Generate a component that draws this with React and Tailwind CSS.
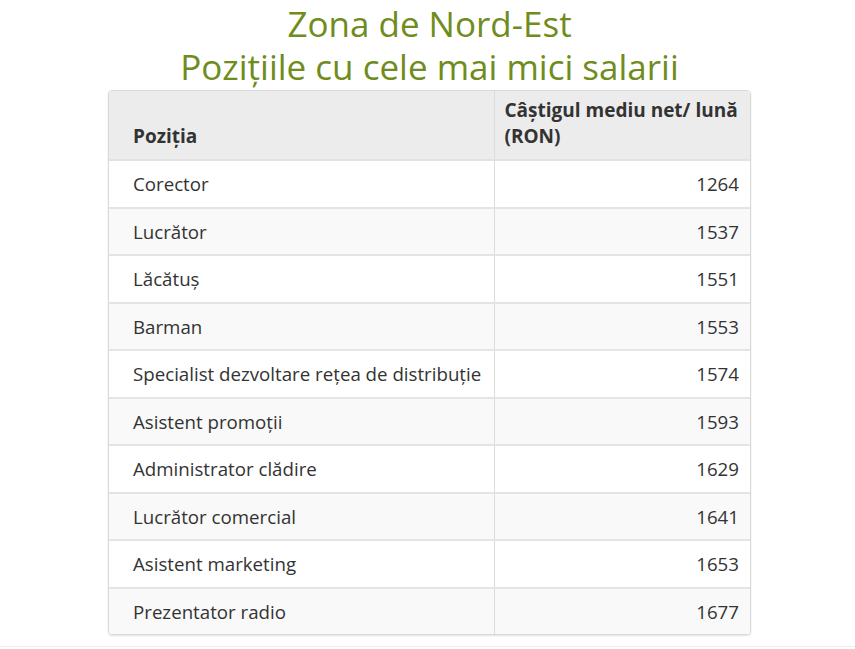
import React from "react";

const rows = [
  ["Corector", "1264"],
  ["Lucrător", "1537"],
  ["Lăcătuș", "1551"],
  ["Barman", "1553"],
  ["Specialist dezvoltare rețea de distribuție", "1574"],
  ["Asistent promoții", "1593"],
  ["Administrator clădire", "1629"],
  ["Lucrător comercial", "1641"],
  ["Asistent marketing", "1653"],
  ["Prezentator radio", "1677"],
];

export default function App() {
  return (
    <div className="w-[855px] h-[649px] bg-white overflow-hidden" style={{ fontFamily: '"Open Sans", sans-serif' }}>
      <div className="h-[647px] pl-[4px] border-b border-[#eeeeee]">
        <h1 className="pt-[2px] text-center text-[35px] leading-[43px] text-[#6f8c1c] font-normal">
          Zona de Nord-Est
          <br />
          Pozițiile cu cele mai mici salarii
        </h1>
        <div className="mx-auto mt-[2px] w-[643px] border border-[#d9d9d9] rounded-[4px] shadow-[0_1px_2px_rgba(0,0,0,0.12)] overflow-hidden">
          <table className="w-full border-collapse text-[18.7px] leading-[25.5px] text-[#333333]">
            <thead>
              <tr className="bg-[#ececec] border-b-2 border-[#e2e2e2]">
                <th className="w-[385px] text-left align-bottom font-bold text-[19px] pl-[24px] pr-[10px] pt-[7px] pb-[10px] border-r border-[#dcdcdc]">
                  Poziția
                </th>
                <th className="text-left align-bottom font-bold text-[19px] pl-[10px] pr-[8px] pt-[7px] pb-[10px]">
                  Câștigul mediu net/ lună (RON)
                </th>
              </tr>
            </thead>
            <tbody>
              {rows.map(([p, v], i) => (
                <tr
                  key={p}
                  className={`${i % 2 === 0 ? "bg-white" : "bg-[#f9f9f9]"} ${i < rows.length - 1 ? "border-b-2 border-[#e4e4e4]" : ""}`}
                >
                  <td className="pl-[24px] pr-[6px] py-[10px] border-r border-[#dcdcdc] whitespace-nowrap">{p}</td>
                  <td className="pr-[11px] pl-[10px] py-[10px] text-right">{v}</td>
                </tr>
              ))}
            </tbody>
          </table>
        </div>
      </div>
    </div>
  );
}
